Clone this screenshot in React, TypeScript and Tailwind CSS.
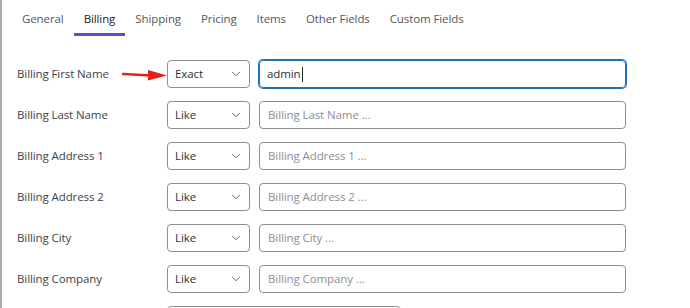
import React from 'react';
import { ChevronDown } from 'lucide-react';

const tabs = ['General', 'Billing', 'Shipping', 'Pricing', 'Items', 'Other Fields', 'Custom Fields'];

const rows = [
  { label: 'Billing First Name', op: 'Exact', value: 'admin', placeholder: '' },
  { label: 'Billing Last Name', op: 'Like', value: '', placeholder: 'Billing Last Name ...' },
  { label: 'Billing Address 1', op: 'Like', value: '', placeholder: 'Billing Address 1 ...' },
  { label: 'Billing Address 2', op: 'Like', value: '', placeholder: 'Billing Address 2 ...' },
  { label: 'Billing City', op: 'Like', value: '', placeholder: 'Billing City ...' },
  { label: 'Billing Company', op: 'Like', value: '', placeholder: 'Billing Company ...' },
];

const Arrow = () => (
  <svg width="46" height="12" viewBox="0 0 46 12" className="absolute left-[-46px] top-[8px]">
    <path d="M1 5 L30 6.5" stroke="#e8201a" strokeWidth="2.6" strokeLinecap="round" />
    <path d="M26 1 L45 6.5 L26 11.5 Z" fill="#e8201a" />
  </svg>
);

export default function App() {
  return (
    <div
      className="h-[308px] w-[690px] overflow-hidden border-l-2 border-[#a7aaad] bg-white"
      style={{ fontFamily: '"Open Sans", "Noto Sans", sans-serif' }}
    >
      <div className="flex pl-[10px] pt-[10px]">
        {tabs.map((t) => (
          <div
            key={t}
            className={`px-[10px] pb-[5px] text-[11.5px] leading-[18px] tracking-[-0.1px] ${
              t === 'Billing' ? 'border-b-[3px] border-[#6c45d6] text-[#1d2327]' : 'border-b-[3px] border-transparent text-[#50575e]'
            }`}
          >
            {t}
          </div>
        ))}
      </div>

      <div className="flex flex-col gap-[13px] pl-[15px] pt-[24px] text-[11.5px] tracking-[-0.1px]">
        {rows.map((r, i) => (
          <div key={r.label} className="flex h-[28px] items-center">
            <div className="w-[150px] text-[#3c434a]">{r.label}</div>
            <div className="relative flex h-[28px] w-[83px] items-center justify-between rounded-[4px] border border-[#8c8f94] pl-[7px] pr-[6px] text-[#2c3338]">
              {i === 0 && <Arrow />}
              <span>{r.op}</span>
              <ChevronDown size={14} strokeWidth={1.6} className="text-[#50575e]" />
            </div>
            {i === 0 ? (
              <div className="ml-[9px] flex h-[28px] w-[367px] items-center rounded-[4px] border border-[#2271b1] pl-[7px] text-[#2c3338] shadow-[0_0_0_1px_#2271b1]">
                admin<span className="ml-[1px] h-[15px] w-[1px] bg-[#1d2327]" />
              </div>
            ) : (
              <div className="ml-[9px] flex h-[28px] w-[367px] items-center rounded-[4px] border border-[#8c8f94] pl-[8px] text-[#8c8f94]">
                {r.placeholder}
              </div>
            )}
          </div>
        ))}
        <div className="flex h-[28px]">
          <div className="w-[150px]" />
          <div className="h-[28px] w-[234px] rounded-[4px] border border-[#8c8f94]" />
        </div>
      </div>
    </div>
  );
}
